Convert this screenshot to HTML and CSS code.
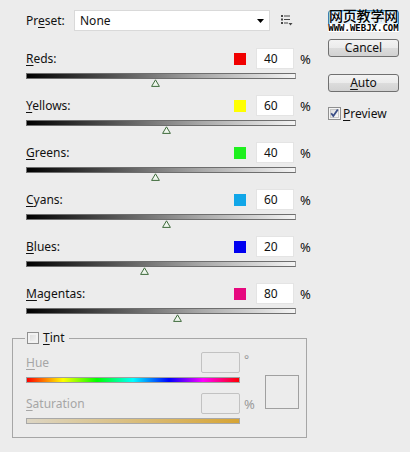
FILE: index.html
```html
<!DOCTYPE html>
<html>
<head>
<meta charset="utf-8">
<link rel="stylesheet" href="styles.css">
</head>
<body>
<div class="dialog">
  <div class="main">
    <div class="preset">
      <span class="preset-label">Pr<u>e</u>set:</span>
      <div class="select"><span>None</span><svg class="arrow" width="7" height="4" viewBox="0 0 7 4"><polygon points="0,0 7,0 3.5,4" fill="#000"/></svg></div>
      <svg class="menu-icon" width="12" height="11" viewBox="0 0 12 11">
        <rect x="0" y="0" width="2" height="2" fill="#444"/><rect x="3" y="0.5" width="6" height="1" fill="#444"/>
        <rect x="0" y="3.5" width="2" height="2" fill="#444"/><rect x="3" y="4" width="6" height="1" fill="#444"/>
        <rect x="0" y="7" width="2" height="2" fill="#444"/><rect x="3" y="7.5" width="4" height="1" fill="#444"/>
        <polygon points="7.5,8 11.5,8 9.5,10.5" fill="#444"/>
      </svg>
    </div>

    <div class="channels">
      <div class="channel">
        <div class="ch-head"><span class="ch-label"><u>R</u>eds:</span><span class="swatch red"></span><span class="num">40</span><span class="pct">%</span></div>
        <div class="track"></div>
        <div class="thumb-row"><svg class="thumb" style="margin-left:125px" width="9" height="8" viewBox="0 0 9 8"><polygon points="4.5,0.8 8.4,7.4 0.6,7.4" fill="#eef6ec" stroke="#3f6a3c" stroke-width="1"/></svg></div>
      </div>
      <div class="channel">
        <div class="ch-head"><span class="ch-label"><u>Y</u>ellows:</span><span class="swatch yellow"></span><span class="num">60</span><span class="pct">%</span></div>
        <div class="track"></div>
        <div class="thumb-row"><svg class="thumb" style="margin-left:136px" width="9" height="8" viewBox="0 0 9 8"><polygon points="4.5,0.8 8.4,7.4 0.6,7.4" fill="#eef6ec" stroke="#3f6a3c" stroke-width="1"/></svg></div>
      </div>
      <div class="channel">
        <div class="ch-head"><span class="ch-label"><u>G</u>reens:</span><span class="swatch green"></span><span class="num">40</span><span class="pct">%</span></div>
        <div class="track"></div>
        <div class="thumb-row"><svg class="thumb" style="margin-left:125px" width="9" height="8" viewBox="0 0 9 8"><polygon points="4.5,0.8 8.4,7.4 0.6,7.4" fill="#eef6ec" stroke="#3f6a3c" stroke-width="1"/></svg></div>
      </div>
      <div class="channel">
        <div class="ch-head"><span class="ch-label"><u>C</u>yans:</span><span class="swatch cyan"></span><span class="num">60</span><span class="pct">%</span></div>
        <div class="track"></div>
        <div class="thumb-row"><svg class="thumb" style="margin-left:136px" width="9" height="8" viewBox="0 0 9 8"><polygon points="4.5,0.8 8.4,7.4 0.6,7.4" fill="#eef6ec" stroke="#3f6a3c" stroke-width="1"/></svg></div>
      </div>
      <div class="channel">
        <div class="ch-head"><span class="ch-label"><u>B</u>lues:</span><span class="swatch blue"></span><span class="num">20</span><span class="pct">%</span></div>
        <div class="track"></div>
        <div class="thumb-row"><svg class="thumb" style="margin-left:114px" width="9" height="8" viewBox="0 0 9 8"><polygon points="4.5,0.8 8.4,7.4 0.6,7.4" fill="#eef6ec" stroke="#3f6a3c" stroke-width="1"/></svg></div>
      </div>
      <div class="channel">
        <div class="ch-head"><span class="ch-label"><u>M</u>agentas:</span><span class="swatch magenta"></span><span class="num">80</span><span class="pct">%</span></div>
        <div class="track"></div>
        <div class="thumb-row"><svg class="thumb" style="margin-left:147px" width="9" height="8" viewBox="0 0 9 8"><polygon points="4.5,0.8 8.4,7.4 0.6,7.4" fill="#eef6ec" stroke="#3f6a3c" stroke-width="1"/></svg></div>
      </div>
    </div>

    <fieldset class="tint">
      <legend class="tint-legend"><span class="checkbox"></span><span><u>T</u>int</span></legend>
      <div class="tint-body">
        <div class="tint-col">
          <div class="t-head"><span class="t-label"><u>H</u>ue</span><span class="t-num"></span><span class="t-unit deg">°</span></div>
          <div class="hue-bar"></div>
          <div class="t-head sat"><span class="t-label"><u>S</u>aturation</span><span class="t-num"></span><span class="t-unit">%</span></div>
          <div class="sat-bar"></div>
        </div>
        <div class="color-box"></div>
      </div>
    </fieldset>
  </div>

  <div class="side">
    <div class="btn ok"><span class="ok-text">OK</span></div>
    <div class="btn cancel">Cancel</div>
    <div class="btn auto"><u>A</u>uto</div>
    <label class="preview">
      <svg class="check" width="13" height="13" viewBox="0 0 13 13">
        <defs><linearGradient id="cb" x1="0" y1="0" x2="1" y2="1"><stop offset="0" stop-color="#dcdcdc"/><stop offset="1" stop-color="#fafafa"/></linearGradient></defs>
        <rect x="0.5" y="0.5" width="12" height="12" fill="#f4f4f4" stroke="#8f8f8f"/>
        <rect x="2.5" y="2.5" width="8" height="8" fill="url(#cb)" stroke="#c8c8c8"/>
        <path d="M3.2 6.3 L5.3 9 L9.8 2.6" fill="none" stroke="#3b4e86" stroke-width="1.8"/>
      </svg>
      <span><u>P</u>review</span>
    </label>
  </div>

  <div class="watermark">
    <div class="wm-cn">网页教学网</div>
    <div class="wm-url">WWW.WEBJX.COM</div>
  </div>
</div>
</body>
</html>
```

FILE: styles.css
```css
* { box-sizing: border-box; }
html, body { margin: 0; }
body {
  background: #ececec;
  font-family: "Noto Sans", "Open Sans", sans-serif;
  font-size: 12px;
  color: #111;
  width: 410px;
  height: 452px;
  overflow: hidden;
}
u { text-decoration-thickness: 1px; text-underline-offset: 2px; }
.dialog { display: flex; position: relative; height: 452px; }
.main { width: 295px; margin-left: 12px; }

.preset { display: flex; align-items: center; margin-top: 10px; padding-left: 14px; height: 21px; }
.preset-label { width: 48px; }
.select {
  width: 196px; height: 21px; background: #fff; border: 1px solid #d9d9d9;
  display: flex; align-items: center; justify-content: space-between;
  padding: 0 5px 0 5px;
}
.menu-icon { margin-left: 11px; }

.channels { margin-top: 17px; padding-left: 14px; }
.channel { height: 47px; }
.ch-head { display: flex; align-items: center; width: 290px; height: 21px; }
.ch-label { flex: 1; }
.swatch { width: 12px; height: 12px; margin-right: 10px; }
.red { background: #f00000; }
.yellow { background: #ffff00; }
.green { background: #1ef01e; }
.cyan { background: #10a6e8; }
.blue { background: #0000f0; }
.magenta { background: #e6087e; }
.num {
  width: 38px; height: 21px; background: #fff; border: 1px solid #e4e4e4;
  padding-left: 7px; line-height: 19px;
}
.pct { width: 16px; margin-left: 6px; font-size: 13px; }
.track {
  width: 270px; height: 6px; margin-top: 4px;
  border: 1px solid #6e6e6e;
  border-right-color: #9a9a9a;
  background: linear-gradient(to right, #000 0%, #5a5a5a 35%, #a8a8a8 65%, #f4f4f4 100%);
}
.thumb-row { height: 8px; }
.thumb { display: block; }

.tint {
  margin: 1px 0 0 0;
  padding: 7px 0 13px 13px;
  border: 1px solid #a6a6a6;
  width: 295px;
  min-width: 0;
}
.tint-legend {
  margin-left: -1px;
  padding: 0 4px 0 2px;
  display: flex; align-items: center; gap: 4px;
  height: 14px; line-height: 14px;
}
.checkbox {
  width: 12px; height: 12px; border: 1px solid #909090;
  background: linear-gradient(135deg, #d8d8d8, #f7f7f7);
  box-shadow: inset 0 0 0 2px #f2f2f2;
}
.tint-body { display: flex; }
.tint-col { width: 234px; }
.t-head { display: flex; align-items: center; height: 21px; }
.t-head.sat { margin-top: 10px; }
.t-label { width: 175px; color: #a6a6a6; }
.t-num { width: 39px; height: 21px; border: 1px solid #c2c2c2; border-radius: 2px; background: #ececec; }
.t-unit { width: 20px; padding-left: 4px; color: #9a9a9a; font-size: 13px; }
.t-unit.deg { align-self: flex-start; line-height: 14px; padding-top: 1px; font-size: 12px; }
.hue-bar {
  width: 214px; height: 6px; margin-top: 4px;
  border: 1px solid #a0a0a0;
  background: linear-gradient(to right, #f00 0%, #ff0 17%, #0f0 33%, #0ff 50%, #00f 67%, #f0f 83%, #f00 100%);
}
.sat-bar {
  width: 214px; height: 6px; margin-top: 4px;
  border: 1px solid #a8a8a8;
  background: linear-gradient(to right, #ddd6c4, #d7a535);
}
.color-box { width: 34px; height: 34px; border: 1px solid #a0a0a0; margin-left: 5px; margin-top: 23px; }

.side { margin-left: 21px; padding-top: 10px; width: 71px; display: flex; flex-direction: column; }
.btn {
  height: 18px; border: 1px solid #707070; border-radius: 3px;
  background: linear-gradient(#f3f3f3 0%, #ebebeb 50%, #dcdcdc 52%, #d2d2d2 100%);
  text-align: center; line-height: 16px;
}
.ok {
  border-color: #3c7fb1; box-shadow: inset 0 0 0 1px #9fd8f5; background: #e9f4fb;
  color: #c4cad0; text-align: right; padding-right: 12px; font-size: 10px; line-height: 14px;
}
.cancel { margin-top: 11px; }
.auto { margin-top: 17px; }
.preview { display: flex; align-items: center; gap: 2px; margin-top: 15px; height: 13px; }
.check { flex: none; }

.watermark {
  position: absolute; left: 328px; top: 7px; width: 71px;
  display: flex; flex-direction: column; align-items: center;
}
.wm-cn {
  font-family: "Noto Sans CJK SC", sans-serif; font-size: 14px; line-height: 16px;
  color: #000; font-weight: 500; letter-spacing: -0.2px;
}
.wm-url {
  font-family: "DejaVu Sans Mono", monospace; font-size: 9px; line-height: 8px;
  font-weight: bold; letter-spacing: 0; color: #000; margin-top: 1px;
  background: #fff; width: 71px; text-align: center; transform: scaleX(1.0);
}
```
